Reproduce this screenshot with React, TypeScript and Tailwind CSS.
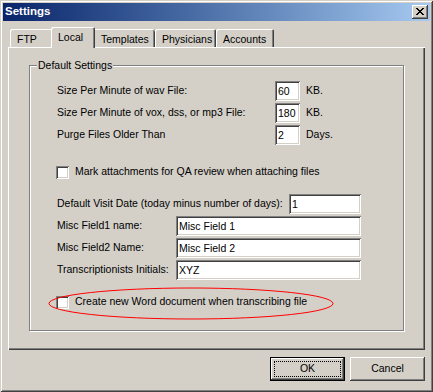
import React from "react";

const sunken =
  "bg-white shadow-[inset_1px_1px_#808080,inset_-1px_-1px_#ffffff,inset_2px_2px_#404040,inset_-2px_-2px_#d4d0c8]";
const raised =
  "bg-[#d4d0c8] shadow-[inset_-1px_-1px_#404040,inset_1px_1px_#ffffff,inset_-2px_-2px_#808080,inset_2px_2px_#d4d0c8]";

function TextBox({ value, w }: { value: string; w: string }) {
  return (
    <div className={`${sunken} ${w} h-[20px] shrink-0 flex items-center pl-[3px] text-black leading-none`}>
      {value}
    </div>
  );
}

function Check() {
  return <div className={`${sunken} w-[13px] h-[13px] shrink-0 -ml-[1px]`} />;
}

function CloseGlyph() {
  const rows = ["XX....XX", ".XX..XX.", "..XXXX..", "...XX...", "..XXXX..", ".XX..XX.", "XX....XX"];
  const rects: React.ReactElement[] = [];
  rows.forEach((r, y) =>
    r.split("").forEach((c, x) => {
      if (c === "X") rects.push(<rect key={`${x}-${y}`} x={x} y={y} width={1} height={1} fill="#000" />);
    })
  );
  return (
    <svg width="8" height="7" viewBox="0 0 8 7" shapeRendering="crispEdges">
      {rects}
    </svg>
  );
}

export default function App() {
  return (
    <div className="w-[433px] h-[392px] bg-[#d4d0c8] p-[3px] flex flex-col text-[10.5px] whitespace-nowrap text-black font-['Liberation_Sans',Arial,sans-serif] shadow-[inset_1px_1px_#d4d0c8,inset_-1px_-1px_#404040,inset_2px_2px_#ffffff,inset_-2px_-2px_#808080]">
      {/* Title bar */}
      <div className="h-[18px] flex items-center justify-between pl-[2px] pr-[2px] bg-linear-to-r from-[#0a246a] to-[#a6caf0]">
        <span className="text-white font-bold text-[11.5px] leading-none">Settings</span>
        <div className={`${raised} w-[16px] h-[14px] flex items-start justify-start pl-[4px] pt-[3px]`}>
          <CloseGlyph />
        </div>
      </div>

      {/* Tabs */}
      <div className="mt-[6px] ml-[5px] mr-[5px] h-[20px] flex items-end pl-[2px]">
        <div className="w-[41px] h-[18px] pl-[7px] pt-[3px] rounded-tl-[2px] shadow-[inset_1px_1px_#ffffff]">FTP</div>
        <div className="relative z-10 w-[44px] h-[21px] -mb-[1px] pl-[7px] pt-[3px] bg-[#d4d0c8] rounded-t-[2px] shadow-[inset_1px_1px_#ffffff,inset_-1px_0_#404040,inset_-2px_0_#808080]">
          Local
        </div>
        <div className="w-[60px] h-[18px] pl-[6px] pt-[3px] rounded-tr-[2px] shadow-[inset_0_1px_#ffffff,inset_-1px_0_#404040,inset_-2px_0_#808080]">
          Templates
        </div>
        <div className="w-[61px] h-[18px] pl-[7px] pt-[3px] rounded-t-[2px] shadow-[inset_1px_1px_#ffffff,inset_-1px_0_#404040,inset_-2px_0_#808080]">
          Physicians
        </div>
        <div className="w-[58px] h-[18px] pl-[7px] pt-[3px] rounded-t-[2px] shadow-[inset_1px_1px_#ffffff,inset_-1px_0_#404040,inset_-2px_0_#808080]">
          Accounts
        </div>
      </div>

      {/* Panel */}
      <div className="ml-[5px] mr-[5px] h-[303px] px-[21px] pt-[18px] shadow-[inset_1px_1px_#ffffff,inset_-1px_-1px_#404040,inset_-2px_-2px_#808080]">
        <div className="relative h-[266px] border border-[#808080] shadow-[inset_1px_1px_#ffffff,1px_1px_#ffffff] pl-[27px] pt-[15px] flex flex-col">
          <span className="absolute left-[7px] -top-[7px] bg-[#d4d0c8] px-[1px] leading-[13px]">Default Settings</span>

          <div className="h-[20px] flex items-center">
            <span className="w-[218px]">Size Per Minute of wav File:</span>
            <TextBox value="60" w="w-[25px]" />
            <span className="ml-[6px]">KB.</span>
          </div>
          <div className="mt-[2px] h-[20px] flex items-center">
            <span className="w-[218px]">Size Per Minute of vox, dss, or mp3 File:</span>
            <TextBox value="180" w="w-[25px]" />
            <span className="ml-[6px]">KB.</span>
          </div>
          <div className="mt-[2px] h-[20px] flex items-center">
            <span className="w-[218px]">Purge Files Older Than</span>
            <TextBox value="2" w="w-[25px]" />
            <span className="ml-[6px]">Days.</span>
          </div>

          <div className="mt-[17px] h-[20px] flex items-center">
            <Check />
            <span className="ml-[6px]">Mark attachments for QA review when attaching files</span>
          </div>

          <div className="mt-[12px] h-[20px] flex items-center">
            <span className="w-[232px]">Default Visit Date (today minus number of days):</span>
            <TextBox value="1" w="w-[72px]" />
          </div>
          <div className="mt-[2px] h-[20px] flex items-center">
            <span className="w-[119px]">Misc Field1 name:</span>
            <TextBox value="Misc Field 1" w="w-[185px]" />
          </div>
          <div className="mt-[2px] h-[20px] flex items-center">
            <span className="w-[119px]">Misc Field2 Name:</span>
            <TextBox value="Misc Field 2" w="w-[185px]" />
          </div>
          <div className="mt-[2px] h-[20px] flex items-center">
            <span className="w-[119px]">Transcriptionists Initials:</span>
            <TextBox value="XYZ" w="w-[185px]" />
          </div>

          <div className="mt-[12px] h-[20px] flex items-center">
            <Check />
            <span className="ml-[6px]">Create new Word document when transcribing file</span>
          </div>

          <svg
            className="absolute left-[18px] top-[221px] pointer-events-none"
            width="286"
            height="33"
            viewBox="0 0 286 33"
          >
            <ellipse cx="143" cy="16.5" rx="142" ry="15.5" fill="none" stroke="#ff0000" strokeWidth="1" />
          </svg>
        </div>
      </div>

      {/* Buttons */}
      <div className="mt-[7px] mr-[5px] flex justify-end gap-[5px]">
        <div className="w-[75px] h-[24px] border border-black p-0">
          <div className={`${raised} w-full h-full flex items-center justify-center p-[3px]`}>
            <div className="w-full h-full border border-dotted border-black flex items-center justify-center">OK</div>
          </div>
        </div>
        <div className={`${raised} w-[75px] h-[24px] flex items-center justify-center`}>Cancel</div>
      </div>
    </div>
  );
}
